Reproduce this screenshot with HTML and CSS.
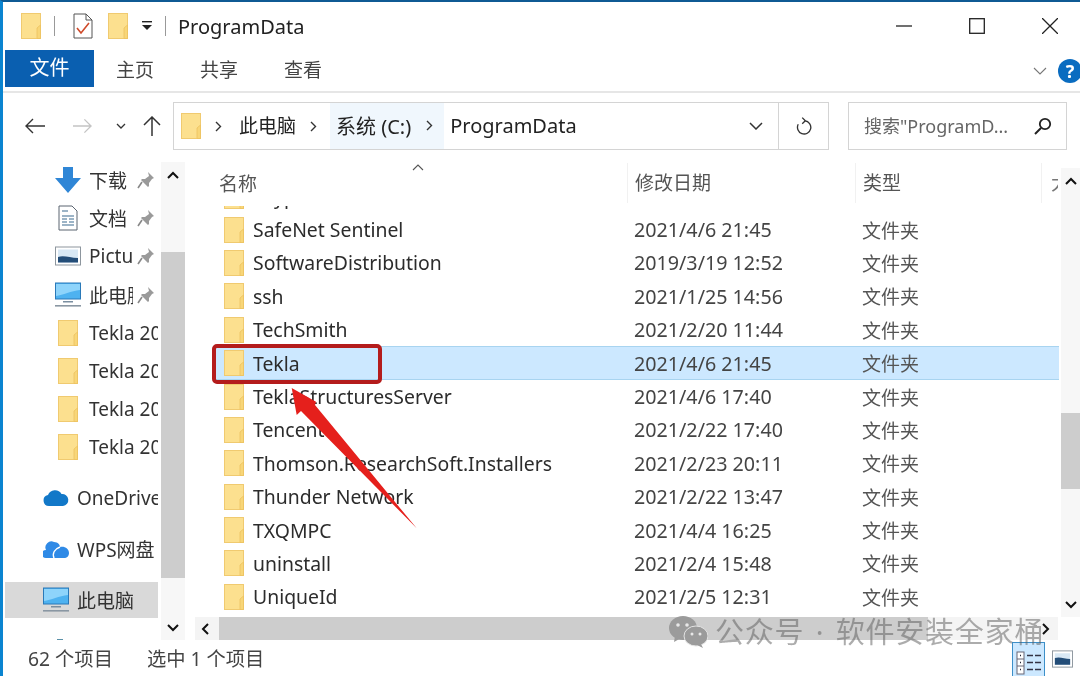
FILE: index.html
```html
<!DOCTYPE html>
<html lang="zh-CN">
<head>
    <meta charset="UTF-8">
    <title>ProgramData</title>
    <link rel="stylesheet" href="styles.css">
</head>
<body>
    <svg class="defs" width="0" height="0">
        <symbol id="folder" viewBox="0 0 20 26">
            <rect x="0.5" y="0.5" width="19" height="25" fill="#fce08f" stroke="#f0ca70"/>
            <path d="M16 25.5V15l3.500-3v13.500z" fill="#f8d678" stroke="#ecc260" stroke-width="0.8"/>
        </symbol>
        <symbol id="pin" viewBox="0 0 18 18">
            <path d="M11 1l6 6-2 1-3 4 0 3-1 1-7-7 1-1h3l4-3z" fill="#9a9a9a"/>
            <path d="M5 11l-4 6" stroke="#888" stroke-width="1.6" fill="none"/>
        </symbol>
        <symbol id="monitor" viewBox="0 0 26 26">
            <rect x="0.5" y="1" width="25" height="16" fill="#4eb2f0" stroke="#2a79b8"/>
            <path d="M1 2h24v6C16 9 8 13 1 14z" fill="#8ed4fb"/>
            <rect x="8" y="19" width="10" height="1.5" fill="#7a8ea0"/>
            <rect x="0" y="23" width="26" height="1.6" fill="#8a97a3"/>
        </symbol>
    </svg>

    <div class="window">
        <header class="titlebar">
            <svg class="folder"><use href="#folder"/></svg>
            <span class="sep sep-a"></span>
            <svg class="qa-check" viewBox="0 0 20 26">
                <path d="M1 1h12l6 6v18H1z" fill="#fff" stroke="#555"/>
                <path d="M13 1v6h6" fill="none" stroke="#555"/>
                <path d="M4 15l4 5 8-10" fill="none" stroke="#cf4a2a" stroke-width="1.6"/>
            </svg>
            <svg class="folder qa-folder"><use href="#folder"/></svg>
            <svg class="qa-drop" viewBox="0 0 12 10">
                <rect x="1" y="0" width="10" height="1.4" fill="#222"/>
                <path d="M1 4h10L6 9z" fill="#222"/>
            </svg>
            <span class="sep sep-b"></span>
            <span class="title">ProgramData</span>
            <div class="win-controls">
                <svg viewBox="0 0 16 16"><path d="M0 8h16" stroke="#222" stroke-width="1.3"/></svg>
                <svg viewBox="0 0 16 16"><rect x="0.7" y="0.7" width="14.6" height="14.6" fill="none" stroke="#222" stroke-width="1.3"/></svg>
                <svg viewBox="0 0 16 16"><path d="M0 0l16 16M16 0L0 16" stroke="#222" stroke-width="1.3"/></svg>
            </div>
        </header>

        <nav class="ribbon">
            <span class="tab tab-file">文件</span>
            <span class="tab">主页</span>
            <span class="tab">共享</span>
            <span class="tab">查看</span>
            <svg class="ribbon-toggle" viewBox="0 0 14 8"><path d="M1 1l6 6 6-6" fill="none" stroke="#777" stroke-width="1.1"/></svg>
            <span class="help">?</span>
        </nav>

        <div class="addressrow">
            <div class="navbtns">
                <svg class="nav-back" viewBox="0 0 20 16"><path d="M20 8H1M8 1L1 8l7 7" fill="none" stroke="#333" stroke-width="1.4"/></svg>
                <svg class="nav-fwd" viewBox="0 0 20 16"><path d="M0 8h19M12 1l7 7-7 7" fill="none" stroke="#c4c4c4" stroke-width="1.4"/></svg>
                <svg class="nav-recent" viewBox="0 0 10 6"><path d="M1 1l4 4 4-4" fill="none" stroke="#333" stroke-width="1.3"/></svg>
                <svg class="nav-up" viewBox="0 0 18 20"><path d="M9 20V1M1 9l8-8 8 8" fill="none" stroke="#333" stroke-width="1.5"/></svg>
            </div>
            <div class="addressbox">
                <svg class="folder"><use href="#folder"/></svg>
                <svg class="crumb-arrow" viewBox="0 0 7 11"><path d="M1 1l4.500 4.500L1 10" fill="none" stroke="#333" stroke-width="1.4"/></svg>
                <span class="crumb">此电脑</span>
                <svg class="crumb-arrow" viewBox="0 0 7 11"><path d="M1 1l4.500 4.500L1 10" fill="none" stroke="#333" stroke-width="1.4"/></svg>
                <span class="crumb crumb-hot">系统 (C:)
                    <svg class="crumb-arrow" viewBox="0 0 7 11"><path d="M1 1l4.500 4.500L1 10" fill="none" stroke="#333" stroke-width="1.4"/></svg>
                </span>
                <span class="crumb crumb-last">ProgramData</span>
                <svg class="addr-drop" viewBox="0 0 14 8"><path d="M1 1l6 6 6-6" fill="none" stroke="#333" stroke-width="1.5"/></svg>
                <span class="refresh">
                    <svg viewBox="0 0 18 20"><path d="M2.500 7.500A7.500 7.500 0 1 0 10 3.500M7 0l3.500 3.500L7 7" fill="none" stroke="#333" stroke-width="1.5"/></svg>
                </span>
            </div>
            <div class="searchbox">
                <span class="search-text">搜索"ProgramD...</span>
                <svg viewBox="0 0 18 18"><circle cx="11" cy="7" r="5.200" fill="none" stroke="#222" stroke-width="1.800"/><path d="M7 11l-6 6" stroke="#222" stroke-width="2"/></svg>
            </div>
        </div>

        <div class="main">
            <aside class="sidebar">
                <div class="tree">
                    <div class="tree-item">
                        <svg class="tree-icon" viewBox="0 0 26 26"><path d="M8 0h10v11h8L13 26 0 11h8z" fill="#2f86d6"/></svg>
                        <span class="tree-label pinned">下载</span>
                        <svg class="pin"><use href="#pin"/></svg>
                    </div>
                    <div class="tree-item">
                        <svg class="tree-icon" viewBox="0 0 26 26">
                            <path d="M4 1h13l5 5v19H4z" fill="#fff" stroke="#5a6470"/>
                            <path d="M7 6h6M7 11h12M7 14h5M14 14h5M7 17h5M14 17h5M7 20h12" stroke="#3a6a90" stroke-width="1.200"/>
                        </svg>
                        <span class="tree-label pinned">文档</span>
                        <svg class="pin"><use href="#pin"/></svg>
                    </div>
                    <div class="tree-item">
                        <svg class="tree-icon" viewBox="0 0 26 26">
                            <rect x="0.500" y="4" width="25" height="18" fill="#fff" stroke="#8d969e"/>
                            <rect x="3" y="6.500" width="20" height="13" fill="#d8e8f5"/>
                            <path d="M3 14c6-2 12 1 20 1v4.500H3z" fill="#234d78"/>
                        </svg>
                        <span class="tree-label pinned">Pictu</span>
                        <svg class="pin"><use href="#pin"/></svg>
                    </div>
                    <div class="tree-item">
                        <svg class="tree-icon"><use href="#monitor"/></svg>
                        <span class="tree-label pinned">此电脑</span>
                        <svg class="pin"><use href="#pin"/></svg>
                    </div>
                    <div class="tree-item"><svg class="tree-icon tree-folder"><use href="#folder"/></svg><span class="tree-label">Tekla 2021</span></div>
                    <div class="tree-item"><svg class="tree-icon tree-folder"><use href="#folder"/></svg><span class="tree-label">Tekla 2021</span></div>
                    <div class="tree-item"><svg class="tree-icon tree-folder"><use href="#folder"/></svg><span class="tree-label">Tekla 2021</span></div>
                    <div class="tree-item"><svg class="tree-icon tree-folder"><use href="#folder"/></svg><span class="tree-label">Tekla 2021</span></div>

                    <div class="tree-root tree-first">
                        <svg class="tree-icon" viewBox="0 0 26 18"><path d="M6 17a5.500 5.500 0 0 1-1-10.900A7.500 7.500 0 0 1 18.500 5 6 6 0 0 1 20 17z" fill="#1278c8"/></svg>
                        <span class="tree-label">OneDrive</span>
                    </div>
                    <div class="tree-root">
                        <svg class="tree-icon" viewBox="0 0 26 20"><path d="M3 19a4 4 0 0 1 0-8 6 6 0 0 1 8-8c4 0 6 3 6 5 5-1 9 2 9 6 0 3-2 5-5 5z" fill="#2f8ae6"/><path d="M11 19c-2-5 1-9 6-11" fill="none" stroke="#fff" stroke-width="1.500"/></svg>
                        <span class="tree-label">WPS网盘</span>
                    </div>
                    <div class="tree-root tree-selected">
                        <svg class="tree-icon"><use href="#monitor"/></svg>
                        <span class="tree-label">此电脑</span>
                    </div>
                    <span class="tree-peek"></span>
                </div>
                <div class="vscroll vscroll-side">
                    <svg class="chev" viewBox="0 0 12 8"><path d="M1 7l5-5 5 5" fill="none" stroke="#111" stroke-width="2"/></svg>
                    <div class="thumb"></div>
                    <svg class="chev chev-end" viewBox="0 0 12 8"><path d="M1 1l5 5 5-5" fill="none" stroke="#111" stroke-width="2"/></svg>
                </div>
            </aside>

            <section class="pane">
                <div class="pane-top">
                    <div class="files">
                        <div class="col-head">
                            <span class="head-name">名称</span>
                            <svg class="sort" viewBox="0 0 12 7"><path d="M1 6l5-5 5 5" fill="none" stroke="#555" stroke-width="1.100"/></svg>
                            <span class="head-date">修改日期</span>
                            <span class="head-type">类型</span>
                            <span class="head-more">大</span>
                        </div>
                        <div class="rows">
                            <div class="row"><span class="name"><svg class="folder"><use href="#folder"/></svg>Skype</span><span class="date">2021/1/5 12:10</span><span class="type">文件夹</span></div>
                            <div class="row"><span class="name"><svg class="folder"><use href="#folder"/></svg>SafeNet Sentinel</span><span class="date">2021/4/6 21:45</span><span class="type">文件夹</span></div>
                            <div class="row"><span class="name"><svg class="folder"><use href="#folder"/></svg>SoftwareDistribution</span><span class="date">2019/3/19 12:52</span><span class="type">文件夹</span></div>
                            <div class="row"><span class="name"><svg class="folder"><use href="#folder"/></svg>ssh</span><span class="date">2021/1/25 14:56</span><span class="type">文件夹</span></div>
                            <div class="row"><span class="name"><svg class="folder"><use href="#folder"/></svg>TechSmith</span><span class="date">2021/2/20 11:44</span><span class="type">文件夹</span></div>
                            <div class="row row-selected"><span class="name"><svg class="folder"><use href="#folder"/></svg>Tekla</span><span class="date">2021/4/6 21:45</span><span class="type">文件夹</span></div>
                            <div class="row"><span class="name"><svg class="folder"><use href="#folder"/></svg>TeklaStructuresServer</span><span class="date">2021/4/6 17:40</span><span class="type">文件夹</span></div>
                            <div class="row"><span class="name"><svg class="folder"><use href="#folder"/></svg>Tencent</span><span class="date">2021/2/22 17:40</span><span class="type">文件夹</span></div>
                            <div class="row"><span class="name"><svg class="folder"><use href="#folder"/></svg>Thomson.ResearchSoft.Installers</span><span class="date">2021/2/23 20:11</span><span class="type">文件夹</span></div>
                            <div class="row"><span class="name"><svg class="folder"><use href="#folder"/></svg>Thunder Network</span><span class="date">2021/2/22 13:47</span><span class="type">文件夹</span></div>
                            <div class="row"><span class="name"><svg class="folder"><use href="#folder"/></svg>TXQMPC</span><span class="date">2021/4/4 16:25</span><span class="type">文件夹</span></div>
                            <div class="row"><span class="name"><svg class="folder"><use href="#folder"/></svg>uninstall</span><span class="date">2021/2/4 15:48</span><span class="type">文件夹</span></div>
                            <div class="row"><span class="name"><svg class="folder"><use href="#folder"/></svg>UniqueId</span><span class="date">2021/2/5 12:31</span><span class="type">文件夹</span></div>
                        </div>
                    </div>
                    <div class="vscroll vscroll-list">
                        <svg class="chev" viewBox="0 0 12 8"><path d="M1 7l5-5 5 5" fill="none" stroke="#111" stroke-width="2"/></svg>
                        <div class="thumb"></div>
                        <svg class="chev chev-end" viewBox="0 0 12 8"><path d="M1 1l5 5 5-5" fill="none" stroke="#111" stroke-width="2"/></svg>
                    </div>
                </div>
                <div class="hscroll">
                    <svg class="hchev" viewBox="0 0 8 12"><path d="M7 1L2 6l5 5" fill="none" stroke="#111" stroke-width="2"/></svg>
                    <div class="hthumb"></div>
                    <svg class="hchev hchev-end" viewBox="0 0 8 12"><path d="M1 1l5 5-5 5" fill="none" stroke="#111" stroke-width="2"/></svg>
                </div>
            </section>
        </div>

        <footer class="statusbar">
            <span>62 个项目</span>
            <span>选中 1 个项目</span>
            <div class="views">
                <span class="view-details">
                    <svg viewBox="0 0 26 28">
                        <rect x="1" y="4" width="7" height="22" fill="#fff" stroke="#667"/>
                        <path d="M1 11h7M1 18h7" stroke="#667"/>
                        <path d="M4 7.500h1M4 14.500h1M4 21.500h1" stroke="#223" stroke-width="1.500"/>
                        <path d="M11 7.500h6M19 7.500h6M11 14.500h6M19 14.500h6M11 21.500h6M19 21.500h6" stroke="#334" stroke-width="1.300"/>
                    </svg>
                </span>
                <svg class="view-large" viewBox="0 0 22 18">
                    <rect x="0.500" y="0.500" width="21" height="17" fill="#fff" stroke="#8d969e"/>
                    <rect x="3" y="3" width="16" height="12" fill="#d8e8f5"/>
                    <path d="M3 8c5-2 10 1 16 1v6H3z" fill="#234d78"/>
                </svg>
            </div>
        </footer>

        <div class="callout-box"></div>
        <svg class="callout-arrow" viewBox="0 0 140 150">
            <polygon points="11.700,8 36,21.700 35,25 136.700,148.300 21,31 16.700,35" fill="#e5201c"/>
        </svg>
        <div class="watermark">
            <svg viewBox="0 0 40 32">
                <ellipse cx="15" cy="12" rx="14" ry="12" fill="#9b9b9b"/>
                <path d="M7 20l-1 6 7-4z" fill="#9b9b9b"/>
                <ellipse cx="28" cy="20" rx="12" ry="10" fill="#9b9b9b" stroke="#e4e4e4"/>
                <path d="M33 28l2 4-6-3z" fill="#9b9b9b"/>
                <circle cx="10" cy="9" r="1.800" fill="#e8e8e8"/>
                <circle cx="19" cy="9" r="1.800" fill="#e8e8e8"/>
                <circle cx="24" cy="18" r="1.500" fill="#e8e8e8"/>
                <circle cx="32" cy="18" r="1.500" fill="#e8e8e8"/>
            </svg>
            <span>公众号 · 软件安装全家桶</span>
        </div>
    </div>
</body>
</html>
```

FILE: styles.css
```css
* {
    box-sizing: border-box;
}
body {
    margin: 0;
    background: white;
    font-family: "Noto Sans", "Noto Sans CJK SC", sans-serif;
    font-size: 19px;
    color: #333;
}
.defs {
    position: absolute;
}
svg {
    display: block;
    flex: none;
}
.window {
    position: relative;
    width: 1080px;
    height: 676px;
    overflow: hidden;
    display: flex;
    flex-direction: column;
    background: white;
    border-left: 3px solid #0a84d0;
    border-top: 2px solid #0f5a94;
    filter: blur(0.35px);
}
.folder {
    width: 20px;
    height: 26px;
}

/* title bar */
.titlebar {
    height: 48px;
    display: flex;
    align-items: center;
    padding-left: 18px;
}
.sep {
    width: 1px;
    height: 20px;
    background: #999;
}
.sep-a {
    margin: 0 18px 0 13px;
}
.qa-check {
    width: 20px;
    height: 26px;
}
.qa-folder {
    margin-left: 15px;
}
.qa-drop {
    width: 12px;
    height: 10px;
    margin-left: 13px;
}
.sep-b {
    margin: 0 12px 0 12px;
}
.title {
    font-size: 20px;
    color: #222;
}
.win-controls {
    margin-left: auto;
    display: flex;
    gap: 57px;
    padding-right: 22px;
}
.win-controls svg {
    width: 16px;
    height: 16px;
}

/* ribbon */
.ribbon {
    height: 43px;
    display: flex;
    align-items: flex-start;
    border-bottom: 2px solid #e6e6e6;
    padding-left: 2px;
    gap: 46px;
}
.tab {
    height: 37px;
    line-height: 41px;
    font-size: 19px;
    color: #444;
}
.tab-file {
    width: 89px;
    margin-right: -24px;
    background: #0a5fb0;
    color: white;
    font-size: 20px;
    line-height: 36px;
    text-align: center;
}
.ribbon-toggle {
    width: 14px;
    height: 8px;
    margin: 17px 0 0 auto;
}
.help {
    width: 24px;
    height: 24px;
    margin: 9px -2px 0 -35px;
    border-radius: 50%;
    background: #0a6cc0;
    color: white;
    font-weight: bold;
    font-size: 18px;
    line-height: 24px;
    text-align: center;
}

/* address bar */
.addressrow {
    height: 69px;
    display: flex;
    align-items: flex-start;
    padding-top: 9px;
}
.navbtns {
    width: 170px;
    height: 48px;
    display: flex;
    align-items: center;
    flex: none;
}
.nav-back {
    width: 20px;
    height: 16px;
    margin-left: 22px;
}
.nav-fwd {
    width: 19px;
    height: 16px;
    margin-left: 28px;
    margin-right: 24px;
}
.nav-recent {
    width: 10px;
    height: 6px;
}
.nav-up {
    width: 18px;
    height: 20px;
    margin-left: 17px;
}
.addressbox {
    width: 656px;
    height: 48px;
    border: 1px solid #d4d4d4;
    display: flex;
    align-items: center;
    padding-left: 7px;
    color: #222;
}
.crumb-arrow {
    width: 7px;
    height: 11px;
    margin: 0 21px 0 14px;
}
.addressbox > .folder + .crumb-arrow {
    margin: 0 17px 0 14px;
}
.crumb {
    white-space: nowrap;
    padding-bottom: 2px;
}
.crumb-hot {
    height: 46px;
    display: flex;
    align-items: center;
    margin-left: -8px;
    padding-left: 6px;
    background: #f0f7fd;
    font-size: 20px;
}
.crumb-hot .crumb-arrow {
    margin-right: 11px;
    margin-left: 15px;
}
.crumb-last {
    margin-left: 6px;
    font-size: 20px;
}
.addr-drop {
    width: 14px;
    height: 8px;
    margin-left: auto;
    margin-right: 15px;
}
.refresh {
    width: 50px;
    height: 46px;
    border-left: 1px solid #d4d4d4;
    display: flex;
    align-items: center;
    justify-content: center;
}
.refresh svg {
    width: 16px;
    height: 19px;
}
.searchbox {
    width: 219px;
    height: 48px;
    margin-left: 19px;
    border: 1px solid #d4d4d4;
    display: flex;
    align-items: center;
    justify-content: space-between;
    padding: 0 14px 0 15px;
    color: #666;
    font-size: 18px;
    white-space: nowrap;
}
.search-text {
    padding-bottom: 3px;
}
.searchbox svg {
    width: 18px;
    height: 18px;
}

/* main area */
.main {
    height: 478px;
    display: flex;
}
.sidebar {
    width: 182px;
    display: flex;
    flex: none;
}
.tree {
    width: 158px;
    overflow: hidden;
    padding-right: 3px;
    position: relative;
}
.tree-item {
    height: 38.2px;
    display: flex;
    align-items: center;
    padding-left: 52px;
}
.tree-item:first-child {
    margin-top: -1px;
}
.tree-icon {
    width: 26px;
    height: 26px;
    margin-right: 8px;
}
.tree-folder {
    width: 20px;
    margin-left: 3px;
    margin-right: 11px;
}
.tree-label {
    white-space: nowrap;
    overflow: hidden;
    flex: 1;
}
.pinned {
    flex: none;
    width: 44px;
}
.pin {
    width: 18px;
    height: 18px;
    margin-left: 4px;
}
.tree-root {
    height: 36px;
    margin-bottom: 15px;
    display: flex;
    align-items: center;
    padding-left: 40px;
}
.tree-first {
    margin-top: 13px;
}
.tree-selected {
    background: #d9d9d9;
    margin-left: 2px;
    padding-left: 38px;
}
.tree-peek {
    position: absolute;
    left: 54px;
    bottom: 0;
    width: 6px;
    height: 1px;
    background: #5a90a8;
}
.vscroll {
    display: flex;
    flex-direction: column;
    align-items: center;
    background: #f7f7f7;
}
.vscroll-side {
    width: 24px;
}
.chev {
    width: 12px;
    height: 8px;
    margin-top: 9px;
}
.chev-end {
    margin-top: auto;
    margin-bottom: 8px;
}
.thumb {
    width: 100%;
    background: #cdcdcd;
}
.vscroll-side .thumb {
    height: 326px;
    margin-top: 73px;
}

/* file list */
.pane {
    flex: 1;
    display: flex;
    flex-direction: column;
    min-width: 0;
}
.pane-top {
    flex: 1;
    display: flex;
    min-height: 0;
}
.files {
    width: 876px;
    position: relative;
}
.col-head {
    height: 44px;
    display: grid;
    grid-template-columns: 415px 228px 186px 1fr;
    padding-left: 34px;
    padding-bottom: 2px;
    align-items: center;
    color: #555;
    font-size: 19px;
    position: relative;
}
.head-date,
.head-type,
.head-more {
    border-left: 1px solid #f1f1f1;
    height: 40px;
    line-height: 40px;
    padding-left: 7px;
    margin-left: -7px;
}
.head-more {
    overflow: hidden;
    width: 17px;
    padding-left: 9px;
    color: #777;
}
.sort {
    position: absolute;
    left: 227px;
    top: 2px;
    width: 12px;
    height: 7px;
}
.rows {
    height: 411px;
    overflow: hidden;
}
.row {
    height: 33.4px;
    margin-left: 28px;
    margin-right: 2px;
    display: grid;
    grid-template-columns: 421px 228px 1fr;
    align-items: center;
    color: #444;
    font-size: 19px;
    border-top: 1px solid transparent;
    border-bottom: 1px solid transparent;
}
.row:first-child {
    margin-top: -26.5px;
}
.name {
    display: flex;
    align-items: center;
    gap: 9px;
    padding-left: 11px;
    color: #2c2c2c;
    font-size: 19.4px;
    white-space: nowrap;
}
.date {
    font-size: 19.7px;
}
.type {
    color: #555;
}
.row-selected {
    background: #cce8ff;
    border-color: #a8d4f0;
}
.vscroll-list {
    width: 19px;
    margin-top: 6px;
}
.vscroll-list .thumb {
    height: 76px;
    margin-top: 228px;
}
.hscroll {
    height: 23px;
    margin-left: 10px;
    margin-right: 22px;
    display: flex;
    align-items: center;
    background: #f4f4f4;
}
.hchev {
    width: 8px;
    height: 12px;
    margin-left: 6px;
}
.hchev-end {
    margin-left: auto;
    margin-right: 8px;
}
.hthumb {
    width: 709px;
    height: 23px;
    margin-left: 10px;
    background: #cdcdcd;
}

/* status bar */
.statusbar {
    flex: 1;
    display: flex;
    align-items: center;
    padding-left: 25px;
    color: #444;
    font-size: 19.3px;
    gap: 34px;
}
.views {
    margin-left: auto;
    display: flex;
    align-items: center;
    gap: 7px;
    padding-right: 7px;
    align-self: flex-end;
}
.view-details {
    width: 33px;
    height: 34px;
    background: #cce8ff;
    border: 1px solid #3c8fc8;
    border-bottom: none;
    display: flex;
    align-items: flex-end;
    justify-content: center;
}
.view-details svg {
    width: 26px;
    height: 28px;
}
.view-large {
    width: 21px;
    height: 18px;
}

/* overlays drawn on top of the screenshot */
.callout-box {
    position: absolute;
    left: 209px;
    top: 342px;
    width: 170px;
    height: 40px;
    border: 4px solid #b41c1c;
    border-radius: 5px;
}
.callout-arrow {
    position: absolute;
    left: 277px;
    top: 378px;
    width: 140px;
    height: 150px;
}
.watermark {
    position: absolute;
    left: 665px;
    top: 614px;
    display: flex;
    align-items: center;
    gap: 7px;
    color: rgba(90, 90, 90, 0.5);
    font-size: 29px;
    line-height: 32px;
    letter-spacing: 0.8px;
    word-spacing: 3px;
    white-space: nowrap;
}
.watermark svg {
    width: 40px;
    height: 32px;
}
```
